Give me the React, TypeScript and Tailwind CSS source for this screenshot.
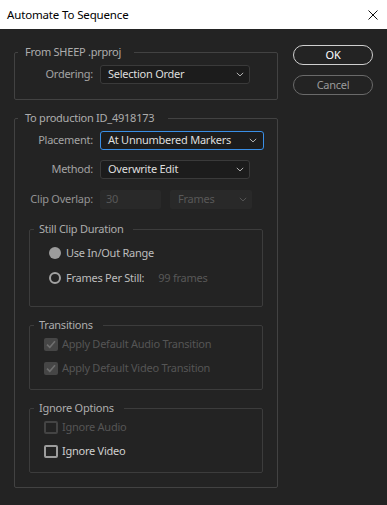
import React from "react";

const Chevron = ({ color = "#b4b4b4" }: { color?: string }) => (
  <svg width="8" height="5" viewBox="0 0 8 5" className="shrink-0">
    <path d="M0.8 0.9 L4 3.9 L7.2 0.9" fill="none" stroke={color} strokeWidth="1" />
  </svg>
);

const Check = () => (
  <svg width="10" height="9" viewBox="0 0 10 9">
    <path d="M1 4.6 L3.8 7.3 L9 1.3" fill="none" stroke="#6f6f6f" strokeWidth="1.6" />
  </svg>
);

const T = "text-[11px] tracking-[-0.25px]";

function Legend({ children, pr = "pr-[13px]" }: { children: React.ReactNode; pr?: string }) {
  return (
    <legend className={`ml-[3px] pl-[7px] ${pr} h-[16px] leading-[16px] ${T} text-[#adadad]`}>{children}</legend>
  );
}

function InnerLegend({ children }: { children: React.ReactNode }) {
  return (
    <legend className={`ml-[4px] pl-[5px] pr-[10px] h-[16px] leading-[16px] ${T} text-[#adadad]`}>{children}</legend>
  );
}

export default function App() {
  return (
    <div className="w-[387px] h-[505px] bg-[#232323] flex flex-col font-['Noto_Sans',sans-serif] overflow-hidden">
      <div className="h-[29px] bg-white flex items-center justify-between pl-[7px] pr-[9px] shrink-0">
        <span className="text-[11.5px] tracking-[-0.15px] text-black leading-none">Automate To Sequence</span>
        <svg width="10" height="10" viewBox="0 0 10 10">
          <path d="M0.5 0.5 L9.5 9.5 M9.5 0.5 L0.5 9.5" stroke="#111" strokeWidth="1" />
        </svg>
      </div>
      <div className="flex pl-[14px] pt-[15px]">
        <div className="w-[264px] flex flex-col">
          <fieldset className="border border-[#424242] rounded-[2px] pb-[15px]">
            <Legend>From SHEEP .prproj</Legend>
            <div className="flex items-center mt-[5px]">
              <div className={`w-[78px] text-right ${T} text-[#a4a4a4]`}>Ordering:</div>
              <div className="ml-[7px] w-[150px] h-[19px] bg-[#1c1c1c] border border-[#3a3a3a] rounded-[3px] flex items-center justify-between pl-[7px] pr-[5px]">
                <span className={`${T} text-[#dedede]`}>Selection Order</span>
                <Chevron />
              </div>
            </div>
          </fieldset>

          <fieldset className="mt-[10px] border border-[#424242] rounded-[2px] pb-[14px]">
            <Legend pr="pr-[14px]">To production ID_4918173</Legend>
            <div className="flex items-center mt-[5px]">
              <div className={`w-[78px] text-right ${T} text-[#a4a4a4]`}>Placement:</div>
              <div className="ml-[7px] w-[164px] h-[19px] bg-[#1c1c1c] border border-[#3a8fe6] rounded-[3px] flex items-center justify-between pl-[7px] pr-[6px]">
                <span className={`${T} text-[#dedede]`}>At Unnumbered Markers</span>
                <Chevron />
              </div>
            </div>
            <div className="flex items-center mt-[10px]">
              <div className={`w-[78px] text-right ${T} text-[#a4a4a4]`}>Method:</div>
              <div className="ml-[7px] w-[150px] h-[19px] bg-[#1c1c1c] border border-[#3a3a3a] rounded-[3px] flex items-center justify-between pl-[7px] pr-[5px]">
                <span className={`${T} text-[#dedede]`}>Overwrite Edit</span>
                <Chevron />
              </div>
            </div>
            <div className="flex items-center mt-[11px]">
              <div className={`w-[78px] text-right ${T} text-[#939393]`}>Clip Overlap:</div>
              <div className="ml-[7px] w-[61px] h-[19px] bg-[#292929] rounded-[2px] flex items-center pl-[6px]">
                <span className={`${T} text-[#585858]`}>30</span>
              </div>
              <div className="ml-[9px] w-[82px] h-[19px] bg-[#292929] rounded-[2px] flex items-center justify-between pl-[8px] pr-[5px]">
                <span className={`${T} text-[#585858]`}>Frames</span>
                <Chevron color="#555555" />
              </div>
            </div>

            <fieldset className="mt-[12px] ml-[14px] w-[234px] border border-[#3c3c3c] rounded-[2px] pb-[20px]">
              <InnerLegend>Still Clip Duration</InnerLegend>
              <div className="flex items-center mt-[8px] h-[16px] pl-[19px]">
                <div className="w-[12px] h-[12px] rounded-full bg-[#9c9c9c]" />
                <span className={`ml-[5px] ${T} text-[#bdbdbd]`}>Use In/Out Range</span>
              </div>
              <div className="flex items-center mt-[9px] h-[16px] pl-[19px]">
                <div className="w-[12px] h-[12px] rounded-full border-2 border-[#a2a2a2]" />
                <span className={`ml-[5px] ${T} text-[#bdbdbd]`}>Frames Per Still:</span>
                <span className={`ml-[14px] ${T} text-[#585858]`}>99 frames</span>
              </div>
            </fieldset>

            <fieldset className="mt-[10px] ml-[14px] w-[234px] border border-[#3c3c3c] rounded-[2px] pb-[13px]">
              <InnerLegend>Transitions</InnerLegend>
              <div className="flex items-center mt-[3px] h-[16px] pl-[14px]">
                <div className="w-[14px] h-[13px] rounded-[2px] bg-[#464646] flex items-center justify-center"><Check /></div>
                <span className={`ml-[4px] ${T} text-[#555555]`}>Apply Default Audio Transition</span>
              </div>
              <div className="flex items-center mt-[8px] h-[16px] pl-[14px]">
                <div className="w-[14px] h-[13px] rounded-[2px] bg-[#464646] flex items-center justify-center"><Check /></div>
                <span className={`ml-[4px] ${T} text-[#555555]`}>Apply Default Video Transition</span>
              </div>
            </fieldset>

            <fieldset className="mt-[10px] ml-[14px] w-[234px] border border-[#3c3c3c] rounded-[2px] pb-[13px]">
              <InnerLegend>Ignore Options</InnerLegend>
              <div className="flex items-center mt-[3px] h-[16px] pl-[14px]">
                <div className="w-[14px] h-[13px] rounded-[2px] border-2 border-[#444444]" />
                <span className={`ml-[4px] ${T} text-[#555555]`}>Ignore Audio</span>
              </div>
              <div className="flex items-center mt-[8px] h-[16px] pl-[14px]">
                <div className="w-[14px] h-[13px] rounded-[2px] border-2 border-[#9c9c9c]" />
                <span className={`ml-[4px] ${T} text-[#cfcfcf]`}>Ignore Video</span>
              </div>
            </fieldset>
          </fieldset>
        </div>

        <div className="ml-[15px] pt-[1px] flex flex-col">
          <div className={`w-[80px] h-[20px] rounded-full border border-[#cfcfcf] flex items-center justify-center ${T} text-white`}>OK</div>
          <div className={`mt-[10px] w-[80px] h-[20px] rounded-full border border-[#6a6a6a] flex items-center justify-center ${T} text-[#9a9a9a]`}>Cancel</div>
        </div>
      </div>
    </div>
  );
}
